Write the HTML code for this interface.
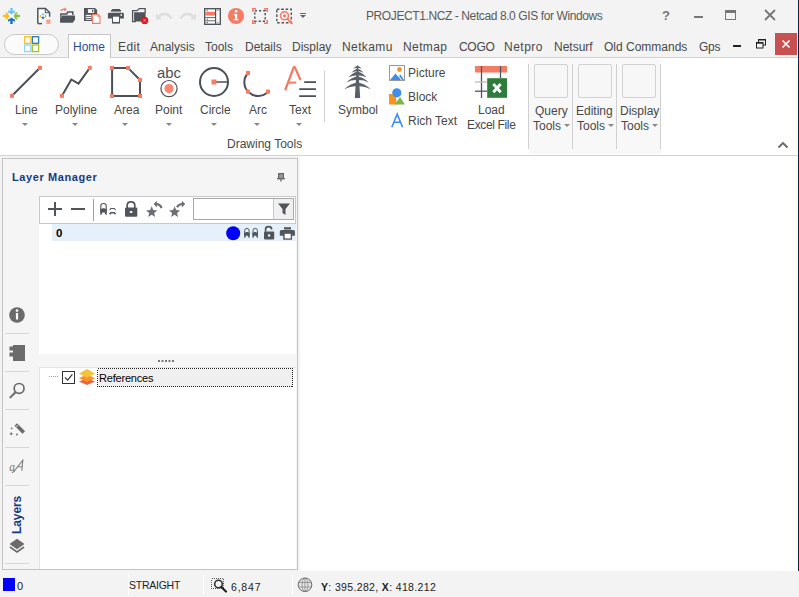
<!DOCTYPE html>
<html><head><meta charset="utf-8">
<style>
*{box-sizing:border-box;margin:0;padding:0}
html,body{width:799px;height:597px;overflow:hidden;background:#f3f3f3;font-family:"Liberation Sans",sans-serif}
#root{position:relative;width:799px;height:597px;overflow:hidden;background:#f3f3f3}
.a{position:absolute}
.t{position:absolute;white-space:nowrap;line-height:1}
svg{position:absolute;overflow:visible;z-index:2}
.tab{position:absolute;top:40px;font-size:12px;color:#484848;white-space:nowrap;line-height:14px}
.lbl{position:absolute;font-size:12px;color:#484848;white-space:nowrap;line-height:14px}
.dd{position:absolute;width:0;height:0;border-left:3px solid transparent;border-right:3px solid transparent;border-top:3px solid #888}
</style></head><body><div id="root">

<!-- title -->
<div class="t" style="left:366px;top:10px;font-size:12px;letter-spacing:-0.4px;color:#5a5a5a">PROJECT1.NCZ - Netcad 8.0 GIS for Windows</div>


<!-- title icons -->
<svg style="left:0;top:0" width="24" height="30" viewBox="0 0 24 30">
 <path d="M10.3 8H12.7V11.5L15 10.2V12.3L11.5 14.3L8 12.3V10.2L10.3 11.5Z" fill="#6ec4ee"/>
 <path d="M10.3 24H12.7V20.5L15 21.8V19.7L11.5 17.7L8 19.7V21.8L10.3 20.5Z" fill="#1b6fc2"/>
 <path d="M3 14.8V17.2H6.5L5.2 19.5H7.3L9.3 16L7.3 12.5H5.2L6.5 14.8Z" fill="#f7bf1b"/>
 <path d="M20 14.8V17.2H16.5L17.8 19.5H15.7L13.7 16L15.7 12.5H17.8L16.5 14.8Z" fill="#88c23f"/>
</svg>
<svg style="left:34px;top:4px" width="20" height="24" viewBox="0 0 20 24">
 <path d="M3.8 19.6V4.4H11.5L15.6 8.5V12.8" fill="#fff" stroke="#50555c" stroke-width="1.5"/>
 <path d="M3.8 19.6H8" fill="none" stroke="#50555c" stroke-width="1.5"/>
 <path d="M11.3 4.6V8.7H15.4" fill="none" stroke="#50555c" stroke-width="1.1"/>
 <path d="M9 8.8L10.8 11L9 11.6L7.2 11Z" fill="#7fcbf0"/>
 <path d="M9 15.4L10.8 13.2L9 12.6L7.2 13.2Z" fill="#1b6fc2"/>
 <path d="M5.2 12.1L7 10.5V13.7Z" fill="#f7bf1b"/>
 <path d="M12.8 12.1L11 10.5V13.7Z" fill="#88c23f"/>
 <rect x="12.3" y="15.6" width="4.2" height="4.2" fill="#f8a090"/>
</svg>
<svg style="left:56px;top:0px" width="24" height="28" viewBox="0 0 24 28">
 <path d="M4.6 10.8Q6.5 8.8 9 9.4" fill="none" stroke="#f47b64" stroke-width="1.6"/>
 <path d="M8.4 7.4L10.8 9.4L8.4 11.4Z" fill="#f47b64"/>
 <path d="M4.9 22V13.9H10.8L11.7 11.9H16.8V15" fill="none" stroke="#50555c" stroke-width="1.5"/>
 <path d="M4.2 22.8V20.5L6.3 15.6H19V19.5L16.8 22.8Z" fill="#50555c"/>
</svg>
<svg style="left:82px;top:4px" width="20" height="24" viewBox="0 0 20 24">
 <path d="M2 4H13L15.1 6.1V10.5H10V17H2Z" fill="#50555c"/>
 <rect x="5.9" y="5.2" width="6.3" height="3.7" fill="#fff"/>
 <rect x="10" y="5.8" width="1.3" height="2.2" fill="#50555c"/>
 <rect x="3.8" y="10.8" width="5.6" height="5" fill="#fff"/>
 <path d="M4 12.4H9M4 14.5H9" stroke="#50555c" stroke-width="0.9"/>
 <path d="M10.6 10.6H16.2L18 12.4V19.4H10.6Z" fill="#fff" stroke="#f47b64" stroke-width="1.1"/>
 <path d="M15.8 10.8V12.8H17.8" fill="none" stroke="#f47b64" stroke-width="0.8"/>
</svg>
<svg style="left:104px;top:4px" width="24" height="24" viewBox="0 0 24 24">
 <rect x="8.1" y="5" width="7.9" height="1.2" fill="#50555c"/>
 <rect x="7" y="6" width="10" height="1.6" fill="#50555c"/>
 <path d="M3.9 10Q3.9 8.7 5.3 8.7H18.5Q19.9 8.7 19.9 10V14.6H3.9Z" fill="#50555c"/>
 <rect x="16.6" y="10" width="1.2" height="2" fill="#fff"/>
 <path d="M8 12.2H16V19.6H8Z" fill="#50555c"/>
 <rect x="9" y="12.7" width="6" height="5.2" fill="#fff"/>
</svg>
<svg style="left:128px;top:4px" width="24" height="24" viewBox="0 0 24 24">
 <path d="M4.6 17.6V6.6H9.2L11.2 4.6H17.2V9" fill="none" stroke="#50555c" stroke-width="1.3"/>
 <path d="M6.1 8.2H17.6V14.5L13.5 17.6H6.1Z" fill="#50555c"/>
 <path d="M4.6 17V17.6H8" stroke="#50555c" stroke-width="1.3"/>
 <circle cx="16.7" cy="16.4" r="3.6" fill="#e8141b"/>
 <path d="M15.5 15.2L17.9 17.6M17.9 15.2L15.5 17.6" stroke="#fff" stroke-width="0.8" stroke-dasharray="0.9 0.5"/>
</svg>
<svg style="left:154px;top:4px" width="22" height="24" viewBox="0 0 22 24">
 <path d="M4.5 13.5C7 9 13.5 8.5 17.5 14.5" fill="none" stroke="#dedede" stroke-width="2.6"/>
 <path d="M2 9.5V15.5H8Z" fill="#dedede"/>
</svg>
<svg style="left:178px;top:4px" width="22" height="24" viewBox="0 0 22 24">
 <path d="M15.5 13.5C13 9 6.5 8.5 2.5 14.5" fill="none" stroke="#dedede" stroke-width="2.6"/>
 <path d="M18 9.5V15.5H12Z" fill="#dedede"/>
</svg>
<svg style="left:202px;top:4px" width="20" height="24" viewBox="0 0 20 24">
 <rect x="2.7" y="4.7" width="15.6" height="15.6" fill="#fff" stroke="#50555c" stroke-width="1.4"/>
 <path d="M13.6 4.5V20.5" stroke="#50555c" stroke-width="1.2"/>
 <rect x="3.4" y="7.8" width="9.6" height="3.8" fill="#f47b64"/>
 <path d="M3.4 13.6H13M3.4 16.8H13" stroke="#50555c" stroke-width="0.9"/>
 <g fill="#50555c"><circle cx="5.3" cy="6.3" r=".65"/><circle cx="5.3" cy="15.2" r=".65"/><circle cx="5.3" cy="18.5" r=".65"/><circle cx="15.9" cy="6.6" r=".65"/><circle cx="15.9" cy="18.3" r=".65"/></g>
</svg>
<svg style="left:226px;top:4px" width="20" height="24" viewBox="0 0 20 24">
 <circle cx="10" cy="12" r="8" fill="#f47b64"/>
 <rect x="9" y="10" width="2.2" height="5.5" fill="#fff"/>
 <rect x="7.8" y="15" width="4.6" height="1.3" fill="#fff"/>
 <rect x="7.8" y="10" width="3" height="1.2" fill="#fff"/>
 <circle cx="10.1" cy="7.4" r="1.3" fill="#fff"/>
</svg>
<svg style="left:250px;top:4px" width="20" height="24" viewBox="0 0 20 24">
 <path d="M2.8 8V4.8H6M14 4.8H17.2V8M17.2 16V19.2H14M6 19.2H2.8V16" fill="none" stroke="#f47b64" stroke-width="1.6"/>
 <rect x="4.8" y="6.8" width="10.4" height="10.4" fill="none" stroke="#50555c" stroke-width="1.5" stroke-dasharray="2.2 2"/>
</svg>
<svg style="left:274px;top:4px" width="24" height="24" viewBox="0 0 24 24">
 <rect x="2.8" y="5.3" width="14.5" height="13.5" fill="none" stroke="#50555c" stroke-width="1.4" stroke-dasharray="2.6 1.8"/>
 <circle cx="10.5" cy="11.8" r="4" fill="#f3f3f3" stroke="#f47b64" stroke-width="1.6"/>
 <circle cx="10.5" cy="11.8" r="1.6" fill="#f47b64"/>
 <path d="M13.6 15L17.8 19.2" stroke="#f47b64" stroke-width="2" stroke-linecap="round"/>
</svg>
<svg style="left:298px;top:4px" width="10" height="24" viewBox="0 0 10 24">
 <rect x="2" y="9" width="6" height="1" fill="#666"/>
 <path d="M2 11H8L5 14Z" fill="#666"/>
</svg>
<!-- window controls -->
<div class="t" style="left:662px;top:9px;font-size:13px;font-weight:bold;color:#777">?</div>
<div class="a" style="left:694px;top:16px;width:9px;height:2px;background:#777"></div>
<div class="a" style="left:725px;top:10px;width:11px;height:10px;border:1px solid #777;border-top-width:3px"></div>
<svg style="left:764px;top:9px" width="12" height="12" viewBox="0 0 12 12"><path d="M1 1L11 11M11 1L1 11" stroke="#777" stroke-width="1.8"/></svg>
<div class="a" style="left:733px;top:45px;width:8px;height:2px;background:#222"></div>
<svg style="left:755px;top:39px" width="12" height="10" viewBox="0 0 12 10"><rect x="3.5" y="0.5" width="7" height="5.5" fill="none" stroke="#222" stroke-width="1"/><rect x="3.5" y="0.5" width="7" height="1" fill="#222"/><rect x="1.5" y="3.5" width="6.5" height="5.5" fill="#f3f3f3" stroke="#222" stroke-width="1"/><rect x="1.5" y="3.5" width="6.5" height="1.2" fill="#222"/></svg>
<svg style="left:775px;top:33px" width="22" height="22" viewBox="0 0 22 22"><path d="M7.5 7.5L14.5 14.5M14.5 7.5L7.5 14.5" stroke="#fff" stroke-width="1.7"/></svg>
<!-- app menu pill icon -->
<svg style="left:22px;top:36px" width="20" height="18" viewBox="0 0 20 18">
 <rect x="2.6" y="0.7" width="6.2" height="6.6" fill="none" stroke="#f5c226" stroke-width="1.3"/>
 <rect x="10.4" y="0.7" width="6.2" height="6.6" fill="none" stroke="#2f7ac0" stroke-width="1.3"/>
 <rect x="2.6" y="9" width="6.2" height="6.6" fill="none" stroke="#8fd3f5" stroke-width="1.3"/>
 <rect x="10.4" y="9" width="6.2" height="6.6" fill="none" stroke="#a8c32a" stroke-width="1.3"/>
</svg>

<!-- tab row -->
<div class="a" style="left:4px;top:34px;width:55px;height:21px;border:1px solid #c8c8c8;border-radius:11px;background:#fbfbfb"></div>
<div class="a" style="left:0;top:57px;width:798px;height:1px;background:#d2d2d2"></div>
<div class="a" style="left:68px;top:34px;width:43px;height:24px;border:1px solid #c6c6c6;border-bottom:none;background:#fff"></div>
<div class="tab" style="left:73px;color:#1f4e9a">Home</div>
<div class="tab" style="left:118px;letter-spacing:0.4px">Edit</div>
<div class="tab" style="left:150px">Analysis</div>
<div class="tab" style="left:205px">Tools</div>
<div class="tab" style="left:245px">Details</div>
<div class="tab" style="left:292px">Display</div>
<div class="tab" style="left:342px;letter-spacing:0.4px">Netkamu</div>
<div class="tab" style="left:403px;letter-spacing:0.4px">Netmap</div>
<div class="tab" style="left:459px;letter-spacing:-0.3px">COGO</div>
<div class="tab" style="left:504px;letter-spacing:0.5px">Netpro</div>
<div class="tab" style="left:554px">Netsurf</div>
<div class="tab" style="left:604px">Old Commands</div>
<div class="tab" style="left:699px;letter-spacing:-0.3px">Gps</div>
<div class="a" style="left:775px;top:33px;width:22px;height:22px;background:#c75050"></div>

<!-- ribbon -->
<div class="a" style="left:0;top:58px;width:798px;height:97px;background:#fff"></div>
<div class="a" style="left:529px;top:59px;width:132px;height:95px;background:#f8f8f8"></div>
<div class="a" style="left:0;top:155px;width:798px;height:1px;background:#d2d2d2"></div>


<!-- ribbon content -->
<svg style="left:0;top:58px" width="330" height="75" viewBox="0 58 330 75">
 <g stroke="#4b5057" stroke-width="2" fill="none">
  <path d="M12 95.8L40 67.8"/>
  <path d="M62 95.8L71.3 79.5L78.5 83.6L89.8 67.8"/>
  <path d="M112.1 96V67.9H128L140 80V96Z"/>
 </g>
 <g fill="#f47b64">
  <rect x="10" y="93.8" width="4" height="4"/><rect x="38" y="65.8" width="4" height="4"/>
  <rect x="60" y="93.8" width="4" height="4"/><rect x="87.8" y="65.8" width="4" height="4"/>
  <rect x="110" y="66" width="4" height="4"/><rect x="126" y="66" width="4" height="4"/><rect x="138" y="78" width="4" height="4"/><rect x="138" y="94" width="4" height="4"/><rect x="110" y="94" width="4" height="4"/>
 </g>
 <text x="157" y="77.6" font-family="Liberation Sans" font-size="15.5" fill="#4b5057" textLength="24" lengthAdjust="spacingAndGlyphs">abc</text>
 <circle cx="169" cy="88.6" r="8.1" fill="none" stroke="#4b5057" stroke-width="1.2"/>
 <circle cx="169" cy="88.6" r="4.6" fill="#f7876f"/>
 <circle cx="214" cy="82" r="14" fill="none" stroke="#4b5057" stroke-width="2"/>
 <path d="M214 82H228" stroke="#4b5057" stroke-width="1.5"/>
 <rect x="211.5" y="79.5" width="5" height="5" fill="#f47b64"/>
 <path d="M248 73A13.6 13.6 0 1 0 268 91.6" fill="none" stroke="#4b5057" stroke-width="2"/>
 <rect x="246" y="71" width="4" height="4" fill="#f47b64"/><rect x="246" y="89.6" width="4" height="4" fill="#f47b64"/><rect x="266" y="89.6" width="4" height="4" fill="#f47b64"/>
 <path d="M285.5 89.3L293.6 67.6Q294.3 66.2 295 67.6L300.2 79.3" fill="none" stroke="#f47b64" stroke-width="2.3" stroke-linecap="round" stroke-linejoin="round"/>
 <path d="M289 82.6H296.3" stroke="#f47b64" stroke-width="2"/>
 <path d="M304.2 82.1H316M299.2 89.1H316M299.2 96.1H316" stroke="#4b5057" stroke-width="1.8"/>
</svg>
<div class="lbl" style="left:15px;top:103px">Line</div>
<div class="lbl" style="left:55px;top:103px">Polyline</div>
<div class="lbl" style="left:114px;top:103px">Area</div>
<div class="lbl" style="left:155px;top:103px">Point</div>
<div class="lbl" style="left:200px;top:103px">Circle</div>
<div class="lbl" style="left:249px;top:103px">Arc</div>
<div class="lbl" style="left:289px;top:103px">Text</div>
<div class="dd" style="left:22px;top:123px"></div>
<div class="dd" style="left:72px;top:123px"></div>
<div class="dd" style="left:122px;top:123px"></div>
<div class="dd" style="left:166px;top:123px"></div>
<div class="dd" style="left:211px;top:123px"></div>
<div class="dd" style="left:254px;top:123px"></div>
<div class="dd" style="left:296px;top:123px"></div>
<div class="lbl" style="left:227px;top:137px">Drawing Tools</div>
<div class="a" style="left:324px;top:71px;width:1px;height:51px;background:#d0d0d0"></div>


<svg style="left:330px;top:58px" width="200" height="75" viewBox="330 58 200 75">
 <path d="M356.9 65.5H358.1L360.2 98H354.8Z" fill="#5b6067"/><path d="M357.5,65.8 Q355.4,66.39999999999999 353.3,68.8 Q355.61,67.60000000000001 357.5,68.2ZM357.5,65.8 Q359.6,66.39999999999999 361.7,68.8 Q359.39,67.60000000000001 357.5,68.2ZM357.5,68.8 Q354.4,69.39999999999999 351.3,72.8 Q354.71,70.7 357.5,71.3ZM357.5,68.8 Q360.6,69.39999999999999 363.7,72.8 Q360.29,70.7 357.5,71.3ZM357.5,71.8 Q352.9,72.39999999999999 348.3,77.6 Q353.36,75.0 357.5,75.6ZM357.5,71.8 Q362.1,72.39999999999999 366.7,77.6 Q361.64,75.0 357.5,75.6ZM357.5,76.6 Q351.9,77.19999999999999 346.3,82.4 Q352.46,79.60000000000001 357.5,80.2ZM357.5,76.6 Q363.1,77.19999999999999 368.7,82.4 Q362.54,79.60000000000001 357.5,80.2ZM357.5,82.6 Q350.8,83.19999999999999 344.1,89.6 Q351.47,85.80000000000001 357.5,86.4ZM357.5,82.6 Q364.2,83.19999999999999 370.9,89.6 Q363.53,85.80000000000001 357.5,86.4Z" fill="#5b6067"/>
 <rect x="389.5" y="65.5" width="15" height="15" fill="#fff" stroke="#9a9a9a" stroke-width="1"/>
 <circle cx="399.5" cy="69.5" r="2.4" fill="#f7941d"/>
 <path d="M390 80L395.5 73.5L401 80Z" fill="#3d8ef0"/>
 <path d="M397.5 77.5L400.5 74.5L404 80H399.5Z" fill="#3d8ef0"/>
 <path d="M397.8 74.8L401.5 80" stroke="#fff" stroke-width="1"/>
 <path d="M389 94H395.5L397 104.5H389Z" fill="#f7941d"/>
 <circle cx="396.8" cy="92.8" r="4.6" fill="#3d8ef0"/>
 <path d="M395 104.5L400 97L405 104.5Z" fill="#7ab648"/>
 <path d="M391.8 127.2L397.2 114.2L402.6 127.2M393.7 122.3H400.7" fill="none" stroke="#3d8ef0" stroke-width="1.6"/>
 <rect x="475" y="66" width="32" height="6.5" fill="#f47b64"/>
 <path d="M481.5 66V98M500.5 66V78" stroke="#50555c" stroke-width="1.3"/>
 <path d="M475 82H487" stroke="#b9b9b9" stroke-width="1.3"/>
 <path d="M475 91.2H487" stroke="#50555c" stroke-width="1.3"/>
 <rect x="487.2" y="78.2" width="19.8" height="19.6" fill="#2d7d3a"/>
 <path d="M493.3 84L500.7 92.2M500.7 84L493.3 92.2" stroke="#fff" stroke-width="2.8"/>
</svg>
<div class="lbl" style="left:338px;top:103px">Symbol</div>
<div class="lbl" style="left:408px;top:66px">Picture</div>
<div class="lbl" style="left:408px;top:90px">Block</div>
<div class="lbl" style="left:408px;top:114px">Rich Text</div>
<div class="lbl" style="left:478px;top:103px">Load</div>
<div class="lbl" style="left:467px;top:118px;letter-spacing:-0.35px">Excel File</div>
<div class="a" style="left:528px;top:64px;width:1px;height:85px;background:#d0d0d0"></div>
<div class="a" style="left:572px;top:64px;width:1px;height:85px;background:#d0d0d0"></div>
<div class="a" style="left:616px;top:64px;width:1px;height:85px;background:#d0d0d0"></div>
<div class="a" style="left:660px;top:64px;width:1px;height:85px;background:#d0d0d0"></div>
<div class="a" style="left:534px;top:64px;width:34px;height:34px;border:1px solid #d2d2d2;border-radius:2px;background:#f7f7f7"></div>
<div class="a" style="left:578px;top:64px;width:34px;height:34px;border:1px solid #d2d2d2;border-radius:2px;background:#f7f7f7"></div>
<div class="a" style="left:622px;top:64px;width:34px;height:34px;border:1px solid #d2d2d2;border-radius:2px;background:#f7f7f7"></div>
<div class="lbl" style="left:535px;top:104px">Query</div>
<div class="lbl" style="left:533px;top:119px">Tools</div>
<div class="dd" style="left:564px;top:124px"></div>
<div class="lbl" style="left:576px;top:104px">Editing</div>
<div class="lbl" style="left:577px;top:119px">Tools</div>
<div class="dd" style="left:608px;top:124px"></div>
<div class="lbl" style="left:620px;top:104px">Display</div>
<div class="lbl" style="left:621px;top:119px">Tools</div>
<div class="dd" style="left:652px;top:124px"></div>
<svg style="left:776px;top:140px" width="14" height="10" viewBox="0 0 14 10"><path d="M2.5 7.5L7 3L11.5 7.5" fill="none" stroke="#666" stroke-width="1.8"/></svg>

<!-- canvas -->
<div class="a" style="left:300px;top:156px;width:498px;height:415px;background:#fff"></div>
<div class="a" style="left:798px;top:0;width:1px;height:571px;background:#0e2150"></div>

<!-- layer panel -->
<div class="a" style="left:2px;top:158px;width:296px;height:412px;border:1px solid #c4c4c4;background:#f5f5f5"></div>
<div class="a" style="left:39px;top:196px;width:257px;height:158px;background:#fff"></div>
<div class="a" style="left:39px;top:367px;width:257px;height:202px;background:#fff;border-top:1px solid #e4e4e4;border-left:1px solid #e4e4e4"></div>


<!-- panel content -->
<div class="t" style="left:12px;top:172px;font-size:11px;font-weight:bold;color:#163a82;letter-spacing:0.6px">Layer Manager</div>
<svg style="left:274px;top:170px" width="14" height="14" viewBox="0 0 14 14">
 <rect x="4.6" y="3.6" width="4.8" height="5" fill="#999" stroke="#666" stroke-width="1.2"/>
 <path d="M3 8.6H11M7 8.6V11.5" stroke="#666" stroke-width="1.3"/>
</svg>
<div class="a" style="left:39px;top:196px;width:257px;height:28px;border:1px solid #c8c8c8;background:#fff"></div>
<div class="a" style="left:93px;top:199px;width:1px;height:22px;background:#a0a0a0"></div>
<svg style="left:40px;top:196px" width="150" height="28" viewBox="40 196 150 28">
 <path d="M48 209H62M55 202V216M71 209H85" stroke="#50555c" stroke-width="2"/>
 <path d="M100.8 213.5V206Q100.8 203.5 103.5 203.5Q106.2 203.5 106.2 206V213.5" fill="none" stroke="#50555c" stroke-width="1.1"/>
 <path d="M100.3 208.8H102.3V208.2H104.7V208.8H106.7V212.5H100.3Z" fill="#50555c"/>
 <path d="M102 212.5L100.5 214.6M105 212.5L106.5 214.6" stroke="#50555c" stroke-width="1.3"/>
 <path d="M109.6 210L110.9 208.5H114.3L115.6 210" fill="none" stroke="#50555c" stroke-width="1.1"/>
 <path d="M109.6 214.3L110.9 212.8H114.3L115.6 214.3" fill="none" stroke="#50555c" stroke-width="1.6"/>
 <path d="M127.2 208V205.2Q127.2 201.8 131 201.8Q134.8 201.8 134.8 205.2V208" fill="none" stroke="#50555c" stroke-width="1.7"/>
 <rect x="125" y="207.5" width="12.3" height="9.2" rx="1.2" fill="#50555c"/>
 <ellipse cx="131.1" cy="212" rx="1.6" ry="1.1" fill="#fff"/>
 <path d="M151.70 206.30L153.23 210.10L157.31 210.38L154.17 213.00L155.17 216.97L151.70 214.80L148.23 216.97L149.23 213.00L146.09 210.38L150.17 210.10Z" fill="#6b6e73"/>
 <path d="M156 204.2Q160 204 161.6 208" fill="none" stroke="#6b6e73" stroke-width="2.2"/>
 <path d="M153.6 204.1L156.9 200.8V207.5Z" fill="#6b6e73"/>
 <path d="M174.60 206.30L176.13 210.10L180.21 210.38L177.07 213.00L178.07 216.97L174.60 214.80L171.13 216.97L172.13 213.00L168.99 210.38L173.07 210.10Z" fill="#6b6e73"/>
 <path d="M177 207.2Q179 203.8 182.5 204" fill="none" stroke="#6b6e73" stroke-width="2.2"/>
 <path d="M185.2 204L181.9 200.8V207.5Z" fill="#6b6e73"/>
</svg>
<div class="a" style="left:193px;top:198px;width:101px;height:22px;border:1px solid #a9a9a9;background:#fff"></div>
<div class="a" style="left:273px;top:199px;width:20px;height:20px;border-left:1px solid #c8c8c8;background:#f0f0f0"></div>
<svg style="left:276px;top:201px" width="16" height="16" viewBox="0 0 16 16"><path d="M2 2.5H14L9.5 8V14L6.5 12V8Z" fill="#50555c"/></svg>
<div class="a" style="left:52px;top:224px;width:244px;height:17px;background:#e5f0fa"></div>
<div class="t" style="left:56px;top:228px;font-size:11.5px;font-weight:bold;color:#000">0</div>
<svg style="left:224px;top:224px" width="74" height="18" viewBox="224 224 74 18">
 <circle cx="233.2" cy="233.2" r="7" fill="#0000ff"/>
 <path d="M244.7 236.5V230.6Q244.7 228.4 246.9 228.4Q249.1 228.4 249.1 230.6V236.5" fill="none" stroke="#50555c" stroke-width="1"/>
 <path d="M244.2 232.6H245.9V232.1H247.9V232.6H249.6V235.8H244.2Z" fill="#50555c"/>
 <path d="M245.6 235.6L244.4 237.6M248.2 235.6L249.4 237.6" stroke="#50555c" stroke-width="1.1"/>
 <path d="M253.0 236.5V230.6Q253.0 228.4 255.20000000000002 228.4Q257.4 228.4 257.4 230.6V236.5" fill="none" stroke="#50555c" stroke-width="1"/>
 <path d="M252.5 232.6H254.20000000000002V232.1H256.2V232.6H257.9V235.8H252.5Z" fill="#50555c"/>
 <path d="M253.9 235.6L252.70000000000002 237.6M256.5 235.6L257.7 237.6" stroke="#50555c" stroke-width="1.1"/>
 <path d="M265.6 231.8V229.2Q265.6 226.6 268.6 226.6Q271.6 226.6 271.6 229.2V229.6" fill="none" stroke="#50555c" stroke-width="1.7"/>
 <rect x="264" y="231.4" width="10.2" height="8" rx="1" fill="#50555c"/>
 <circle cx="269.1" cy="235.4" r="1.2" fill="#fff"/>
 <rect x="284" y="227.2" width="7" height="2.3" fill="#50555c"/>
 <path d="M279.8 231.5Q279.8 230 281.3 230H293.4Q294.9 230 294.9 231.5V235.8H292V239.8H283.2V235.8H279.8Z" fill="#50555c"/>
 <rect x="284.7" y="233.8" width="6" height="4.6" fill="#fff"/>
</svg>
<div class="a" style="left:39px;top:355px;width:258px;height:12px;background:#f6f6f6"></div>
<svg style="left:150px;top:356px" width="30" height="8" viewBox="150 356 30 8"><g fill="#777"><rect x="158" y="360" width="2" height="2"/><rect x="161.5" y="360" width="2" height="2"/><rect x="165" y="360" width="2" height="2"/><rect x="168.5" y="360" width="2" height="2"/><rect x="172" y="360" width="2" height="2"/></g></svg>
<svg style="left:40px;top:367px" width="258" height="22" viewBox="40 367 258 22">
 <path d="M49 376.5H59" stroke="#a0a0a0" stroke-width="1" stroke-dasharray="1 1"/>
 <rect x="62.5" y="371.5" width="12" height="12" fill="#fff" stroke="#333" stroke-width="1"/>
 <path d="M65 377.3L67.6 380.2L72.4 374.4" fill="none" stroke="#333" stroke-width="1.2"/>
 <path d="M87 378.2L95 381.6L87 385L79 381.6Z" fill="#ef6040"/>
 <path d="M87 374.3L95 378.2L87 382.1L79 378.2Z" fill="#f7922c"/>
 <path d="M87 369L95 373.4L87 377.8L79 373.4Z" fill="#f3c43a"/>
 <rect x="97.5" y="368.5" width="195" height="18" fill="#efefef" stroke="#222" stroke-width="1" stroke-dasharray="1 1" shape-rendering="crispEdges"/>
</svg>
<div class="t" style="left:99px;top:373px;font-size:11px;color:#000;letter-spacing:-0.2px;z-index:3">References</div>
<!-- sidebar -->
<svg style="left:3px;top:300px" width="36" height="270" viewBox="3 300 36 270">
 <g stroke="#d6d6d6" stroke-width="1"><path d="M5 333.5H29M5 371.5H29M5 409.5H29M5 447.5H29M5 485.5H29M5 563.5H29"/></g>
 <circle cx="17" cy="315" r="7.8" fill="#6b6b6b"/>
 <rect x="15.9" y="313" width="2.2" height="6.5" fill="#fff"/>
 <circle cx="17" cy="310.6" r="1.3" fill="#fff"/>
 <path d="M13 345H25V361H13V356.5H9.5V352.5H13V350.5H9.5V346.5H13Z" fill="#6b6b6b"/>
 <circle cx="19.1" cy="388.4" r="4.9" fill="none" stroke="#6b6b6b" stroke-width="1.7"/>
 <path d="M15.5 392.2L10.3 397.4" stroke="#6b6b6b" stroke-width="2" stroke-linecap="round"/>
 <path d="M15.8 424.6L23.8 432.6" stroke="#6b6b6b" stroke-width="3.6"/>
 <path d="M15.6 427.5L18.3 424.8" stroke="#f5f5f5" stroke-width="0.8"/>
 <path d="M9.8 433.8H12.6M11.2 432.4V435.2" stroke="#6b6b6b" stroke-width="1.1"/>
 <circle cx="11.7" cy="428.3" r="0.9" fill="#6b6b6b"/>
 <path d="M16.3 435.3L17.6 433.8" stroke="#6b6b6b" stroke-width="1.3"/>
 <text x="9.2" y="470.5" font-family="Liberation Serif" font-style="italic" font-size="11.5" fill="#777">a</text>
 <path d="M12 472.3Q13.8 472.8 15.5 469.5L22.8 460.2L21.8 470.8" fill="none" stroke="#777" stroke-width="1.1"/>
 <path d="M17.5 466.8H22" stroke="#777" stroke-width="0.9"/>
 <path d="M17 539.5L23.5 544L17 548.5L10.5 544Z" fill="#6b6b6b" stroke="#6b6b6b" stroke-width="1.2" stroke-linejoin="round"/>
 <path d="M10 547L17 552L24 547" fill="none" stroke="#6b6b6b" stroke-width="1.6"/>
</svg>
<div class="t" style="left:11px;top:534px;font-size:12px;font-weight:bold;color:#163a82;transform:rotate(-90deg);transform-origin:0 0;letter-spacing:-0.1px">Layers</div>

<!-- status bar -->
<div class="a" style="left:3px;top:578px;width:12px;height:13px;background:#0000ff"></div>
<div class="t" style="left:17px;top:581px;font-size:11px;color:#222">0</div>
<div class="a" style="left:128px;top:574px;width:1px;height:21px;background:#fff"></div>
<div class="a" style="left:203px;top:574px;width:1px;height:21px;background:#fff"></div>
<div class="a" style="left:292px;top:574px;width:1px;height:21px;background:#fff"></div>
<div class="t" style="left:129px;top:580px;font-size:10.5px;color:#222;letter-spacing:-0.25px">STRAIGHT</div>
<svg style="left:208px;top:574px" width="24" height="22" viewBox="208 574 24 22">
 <rect x="211.5" y="578.5" width="12" height="10" fill="none" stroke="#555" stroke-width="1" stroke-dasharray="1 1" shape-rendering="crispEdges"/>
 <circle cx="218.5" cy="584" r="3.8" fill="#f3f3f3" stroke="#333" stroke-width="1.6"/>
 <path d="M221.3 587L226 591.5" stroke="#222" stroke-width="2.2" stroke-linecap="round"/>
</svg>
<div class="t" style="left:231px;top:582px;font-size:10.5px;color:#222;letter-spacing:0.8px">6,847</div>
<svg style="left:296px;top:576px" width="18" height="18" viewBox="296 576 18 18">
 <circle cx="305" cy="584.8" r="6.8" fill="#e6e6e6" stroke="#666" stroke-width="1"/>
 <g fill="none" stroke="#888" stroke-width="0.8">
  <ellipse cx="305" cy="584.8" rx="3" ry="6.6"/>
  <path d="M298.5 582.5H311.5M298.5 587H311.5M305 578.2V591.4"/>
 </g>
</svg>
<div class="t" style="left:321px;top:582px;font-size:10.5px;color:#222;letter-spacing:0.35px"><b>Y</b>: 395.282, <b>X</b>: 418.212</div>


</div></body></html>
